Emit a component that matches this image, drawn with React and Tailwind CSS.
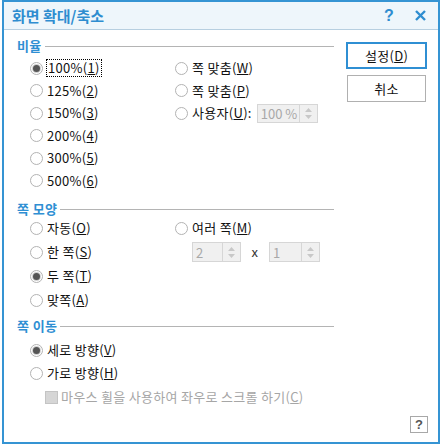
import React from "react";

const FONT = { fontFamily: '"Noto Sans CJK KR", "Noto Sans", sans-serif' };

function Radio({ checked }) {
  return (
    <span className="w-[13px] h-[13px] rounded-full border border-[#b3b3b3] bg-white flex items-center justify-center shrink-0">
      {checked && <span className="w-[7px] h-[7px] rounded-full bg-[#555555] ring-1 ring-[#d0d0d0]" />}
    </span>
  );
}

function RadioItem({ checked, children, focus }) {
  return (
    <div className="flex items-center gap-[4px]">
      <Radio checked={checked} />
      <span
        className={
          "leading-[16px] whitespace-nowrap text-[#111111] " +
          (focus ? "outline-1 outline-dotted outline-black px-[1px]" : "")
        }
      >
        {children}
      </span>
    </div>
  );
}

function Header({ children }) {
  return (
    <div className="flex items-center h-[14px]">
      <span className="text-[13px] font-bold text-[#2f8fd3] leading-[14px] whitespace-nowrap tracking-[0.4px]">{children}</span>
      <span className="flex-1 h-px bg-[#b4b4b4] ml-[3px]" />
    </div>
  );
}

function Arrows() {
  return (
    <span className="w-[18px] h-full border-l border-[#d6d6d6] flex flex-col items-center justify-center gap-[3px]">
      <svg width="7" height="4" viewBox="0 0 7 4">
        <path d="M0 4 L3.5 0 L7 4 Z" fill="#c8c8c8" />
      </svg>
      <svg width="7" height="4" viewBox="0 0 7 4">
        <path d="M0 0 L3.5 4 L7 0 Z" fill="#c8c8c8" />
      </svg>
    </span>
  );
}

function Spinner({ value, width, height }) {
  return (
    <div
      className={"flex items-stretch border border-[#d6d6d6] bg-[#f0f0f0] " + width + " " + height}
    >
      <span className="flex-1 text-[#a8a8a8] pl-[3px] leading-none flex items-center tracking-normal">{value}</span>
      <Arrows />
    </div>
  );
}

export default function App() {
  return (
    <div className="w-[442px] h-[445px] bg-white pl-[2px] pr-[2px] pb-[1px] text-[13px] tracking-[0.3px]" style={FONT}>
      <div className="h-[444px] border-2 border-[#3594d3] flex flex-col">
        <div className="h-[28px] shrink-0 bg-[#eef6fb] border-b border-[#b7cfe0] flex items-center pl-[8px] pr-[12px]">
          <span className="text-[15px] font-bold text-[#2e8dd0] leading-none flex-1 tracking-normal">화면 확대/축소</span>
          <span className="text-[16px] font-bold text-[#2e8dd0] leading-none mr-[21px]" style={{ fontFamily: '"Liberation Sans", sans-serif' }}>?</span>
          <svg width="11" height="11" viewBox="0 0 11 11">
            <path d="M1 1 L10 10 M10 1 L1 10" stroke="#2e8dd0" strokeWidth="2.4" />
          </svg>
        </div>
        <div className="flex flex-1 min-h-0">
          <div className="w-[330px] pl-[13px] pt-[9px]">
            <Header>비율</Header>
            <div className="grid grid-cols-[145px_1fr] pl-[13px] mt-[4px] auto-rows-[22.5px] items-center">
              <RadioItem checked focus>100%(<u>1</u>)</RadioItem>
              <RadioItem>쪽 맞춤(<u>W</u>)</RadioItem>
              <RadioItem>125%(<u>2</u>)</RadioItem>
              <RadioItem>쪽 맞춤(<u>P</u>)</RadioItem>
              <RadioItem>150%(<u>3</u>)</RadioItem>
              <div className="flex items-center">
                <RadioItem>사용자(<u>U</u>):</RadioItem>
                <div className="ml-[5px]">
                  <Spinner value="100 %" width="w-[61px]" height="h-[19px]" />
                </div>
              </div>
              <RadioItem>200%(<u>4</u>)</RadioItem>
              <div />
              <RadioItem>300%(<u>5</u>)</RadioItem>
              <div />
              <RadioItem>500%(<u>6</u>)</RadioItem>
              <div />
            </div>

            <div className="mt-[10px]">
              <Header>쪽 모양</Header>
            </div>
            <div className="grid grid-cols-[145px_1fr] pl-[13px] auto-rows-[24px] items-center">
              <RadioItem>자동(<u>O</u>)</RadioItem>
              <RadioItem>여러 쪽(<u>M</u>)</RadioItem>
              <RadioItem>한 쪽(<u>S</u>)</RadioItem>
              <div className="flex items-center pl-[17px]">
                <Spinner value="2" width="w-[49px]" height="h-[20px]" />
                <span className="w-[28px] text-center text-[#333333]">x</span>
                <Spinner value="1" width="w-[51px]" height="h-[20px]" />
              </div>
              <RadioItem checked>두 쪽(<u>T</u>)</RadioItem>
              <div />
              <RadioItem>맞쪽(<u>A</u>)</RadioItem>
              <div />
            </div>

            <div className="mt-[7px]">
              <Header>쪽 이동</Header>
            </div>
            <div className="pl-[13px] mt-[5.5px]">
              <div className="h-[23px] flex items-center">
                <RadioItem checked>세로 방향(<u>V</u>)</RadioItem>
              </div>
              <div className="h-[23px] flex items-center">
                <RadioItem>가로 방향(<u>H</u>)</RadioItem>
              </div>
              <div className="h-[25px] flex items-center pl-[15px] gap-[3px]">
                <span className="w-[13px] h-[13px] border border-[#c4c4c4] bg-[#d6d6d6] shrink-0" />
                <span className="text-[#a6a6a6] whitespace-nowrap leading-[16px]">
                  마우스 휠을 사용하여 좌우로 스크롤 하기(<u>C</u>)
                </span>
              </div>
            </div>
          </div>

          <div className="flex-1 flex flex-col pl-[12px] pt-[12px] pr-[10px] pb-[9px]">
            <button className="w-[81px] h-[27px] border-2 border-[#2f8fd3] bg-white text-[#111111] flex items-center justify-center leading-none">
              설정(<u>D</u>)
            </button>
            <button className="w-[79px] h-[27px] ml-[1px] mt-[6px] border border-[#b0b0b0] bg-white text-[#111111] flex items-center justify-center leading-none">
              취소
            </button>
            <div className="mt-auto self-end w-[18px] h-[17px] border border-[#a8a8a8] bg-white flex items-center justify-center text-[13px] font-bold text-[#555555] leading-none" style={{ fontFamily: '"Liberation Sans", sans-serif' }}>
              ?
            </div>
          </div>
        </div>
      </div>
    </div>
  );
}
